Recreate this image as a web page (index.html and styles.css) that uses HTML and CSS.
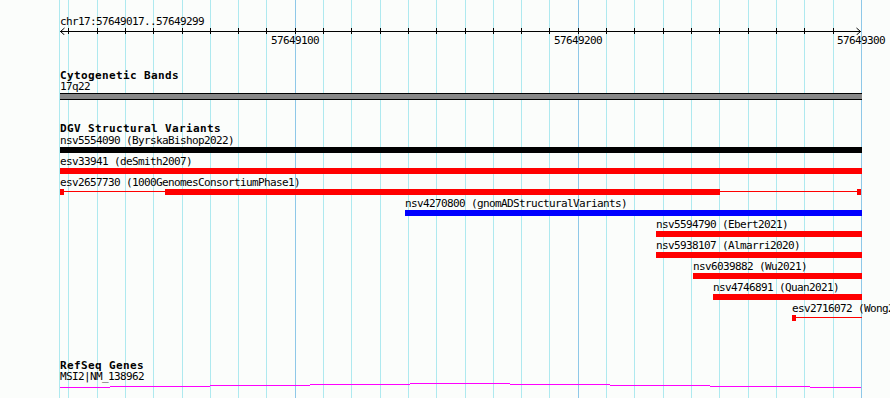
FILE: index.html
```html
<!DOCTYPE html>
<html lang="en">
<head>
    <meta charset="UTF-8">
    <meta name="viewport" content="width=device-width, initial-scale=1.0">
    <title>chr17:57649017..57649299</title>
    <link rel="stylesheet" href="styles.css">
</head>
<body>

<div class="browser">

    <!-- Grid lines every 10 bp, darker every 100 bp -->
    <svg class="grid" width="890" height="398">
        <path class="minor" d="M59.5 0V398 M68.5 0V398 M97.5 0V398 M125.5 0V398 M153.5 0V398 M182.5 0V398 M210.5 0V398 M238.5 0V398 M266.5 0V398
            M323.5 0V398 M351.5 0V398 M380.5 0V398 M408.5 0V398 M436.5 0V398 M465.5 0V398 M493.5 0V398 M521.5 0V398 M549.5 0V398
            M606.5 0V398 M634.5 0V398 M663.5 0V398 M691.5 0V398 M719.5 0V398 M748.5 0V398 M776.5 0V398 M804.5 0V398 M833.5 0V398"/>
        <path class="major" d="M295.5 0V398 M578.5 0V398 M861.5 0V398"/>
    </svg>

    <div class="view">

        <!-- Ruler -->
        <div class="ruler">
            <div class="locus">chr17:57649017..57649299</div>
            <svg class="scale" width="802" height="8">
                <rect x="0" y="4" width="801" height="1"/>
                <path class="ticks" d="M8.5 1V7 M37.5 1V7 M65.5 1V7 M93.5 1V7 M122.5 1V7 M150.5 1V7 M178.5 1V7 M206.5 1V7 M235.5 1V7
                    M263.5 1V7 M291.5 1V7 M320.5 1V7 M348.5 1V7 M376.5 1V7 M405.5 1V7 M433.5 1V7 M461.5 1V7 M489.5 1V7 M518.5 1V7
                    M546.5 1V7 M574.5 1V7 M603.5 1V7 M631.5 1V7 M659.5 1V7 M688.5 1V7 M716.5 1V7 M744.5 1V7 M773.5 1V7"/>
                <polyline class="arrow" points="4.5,1 0.5,4.5 4.5,8"/>
                <polyline class="arrow" points="796.5,1 800.5,4.5 796.5,8"/>
            </svg>
            <div class="tick-labels">
                <span class="tick-label" style="left: 235px">57649100</span>
                <span class="tick-label" style="left: 518px">57649200</span>
                <span class="tick-label" style="left: 801px">57649300</span>
            </div>
        </div>

        <!-- Cytogenetic Bands -->
        <div class="track cyto">
            <div class="track-title">Cytogenetic Bands</div>
            <div class="label">17q22</div>
            <div class="band"></div>
        </div>

        <!-- DGV Structural Variants -->
        <div class="track dgv">
            <div class="track-title">DGV Structural Variants</div>
            <div class="rows">
                <div class="row">
                    <div class="feature" style="margin-left: 0px">
                        <div class="label">nsv5554090 (ByrskaBishop2022)</div>
                        <div class="bar black" style="width: 802px"></div>
                    </div>
                </div>
                <div class="row">
                    <div class="feature" style="margin-left: 0px">
                        <div class="label">esv33941 (deSmith2007)</div>
                        <div class="bar red" style="width: 802px"></div>
                    </div>
                </div>
                <div class="row">
                    <div class="feature" style="margin-left: 0px">
                        <div class="label">esv2657730 (1000GenomesConsortiumPhase1)</div>
                        <div class="parts">
                            <div class="part box" style="width: 4px"></div>
                            <div class="part line" style="width: 101px"></div>
                            <div class="part box" style="width: 555px"></div>
                            <div class="part line" style="width: 137px"></div>
                            <div class="part box" style="width: 4px"></div>
                        </div>
                    </div>
                </div>
                <div class="row">
                    <div class="feature" style="margin-left: 345px">
                        <div class="label">nsv4270800 (gnomADStructuralVariants)</div>
                        <div class="bar blue" style="width: 457px"></div>
                    </div>
                </div>
                <div class="row">
                    <div class="feature" style="margin-left: 596px">
                        <div class="label">nsv5594790 (Ebert2021)</div>
                        <div class="bar red" style="width: 206px"></div>
                    </div>
                </div>
                <div class="row">
                    <div class="feature" style="margin-left: 596px">
                        <div class="label">nsv5938107 (Almarri2020)</div>
                        <div class="bar red" style="width: 206px"></div>
                    </div>
                </div>
                <div class="row">
                    <div class="feature" style="margin-left: 633px">
                        <div class="label">nsv6039882 (Wu2021)</div>
                        <div class="bar red" style="width: 169px"></div>
                    </div>
                </div>
                <div class="row">
                    <div class="feature" style="margin-left: 653px">
                        <div class="label">nsv4746891 (Quan2021)</div>
                        <div class="bar red" style="width: 149px"></div>
                    </div>
                </div>
                <div class="row">
                    <div class="feature" style="margin-left: 732px">
                        <div class="label">esv2716072 (Wong2007)</div>
                        <div class="parts">
                            <div class="part box" style="width: 4px"></div>
                            <div class="part line" style="width: 66px"></div>
                        </div>
                    </div>
                </div>
            </div>
        </div>

        <!-- RefSeq Genes -->
        <div class="track refseq">
            <div class="track-title">RefSeq Genes</div>
            <div class="label">MSI2|NM_138962</div>
            <svg class="intron" width="802" height="8">
                <path d="M0 5.5H50 M50 4.5H150 M150 3.5H250 M250 2.5H350 M350 1.5H450 M450 2.5H550 M550 3.5H650 M650 4.5H750 M750 5.5H801"/>
            </svg>
        </div>

    </div>
</div>

</body>
</html>
```

FILE: styles.css
```css
/* Global */
* {
    margin: 0;
    padding: 0;
    box-sizing: border-box;
}

body {
    background: #fbfdfb;
    color: #000;
    font-family: "DejaVu Sans Mono", "Liberation Mono", monospace;
    overflow: hidden;
}

.browser {
    position: relative;
    width: 890px;
    height: 398px;
    overflow: hidden;
}

/* Grid */
.grid {
    position: absolute;
    top: 0;
    left: 0;
    shape-rendering: crispEdges;
}

.grid .minor {
    stroke: #aee9ef;
    stroke-width: 1;
}

.grid .major {
    stroke: #8ec8e8;
    stroke-width: 1;
}

/* Visible region starts at x = 60 */
.view {
    position: relative;
    margin-left: 60px;
    width: 802px;
}

/* Text */
.label,
.locus,
.tick-label {
    font-size: 11px;
    line-height: 11px;
    letter-spacing: -0.62px;
    white-space: nowrap;
}

.track-title {
    font-size: 11px;
    font-weight: bold;
    line-height: 11px;
    letter-spacing: 0.38px;
    white-space: nowrap;
}

/* Ruler */
.ruler {
    padding-top: 16px;
}

.scale {
    display: block;
}

.scale rect {
    fill: #000;
}

.scale .ticks {
    stroke: #000;
    shape-rendering: crispEdges;
}

.scale .arrow {
    fill: none;
    stroke: #000;
    stroke-width: 1;
}

.tick-labels {
    position: relative;
    height: 11px;
}

.tick-label {
    position: absolute;
    top: 0;
    transform: translateX(-50%);
}

/* Tracks */
.cyto {
    margin-top: 24px;
}

.band {
    height: 7px;
    margin-top: 1px;
    background: #888;
    border-top: 1px solid #000;
    border-bottom: 1px solid #000;
}

.dgv {
    margin-top: 23px;
}

.rows {
    margin-top: 1px;
}

.row {
    height: 21px;
}

.bar {
    height: 6px;
    margin-top: 1px;
}

.bar.black { background: #000; }
.bar.red { background: #f00; }
.bar.blue { background: #00f; }

.parts {
    display: flex;
    height: 6px;
    margin-top: 1px;
}

.part.box {
    height: 6px;
    background: #f00;
}

.part.line {
    height: 1px;
    margin-top: 2px;
    background: #f00;
}

.refseq {
    margin-top: 36px;
}

.intron {
    display: block;
}

.intron path {
    stroke: #f0f;
    stroke-width: 1;
    shape-rendering: crispEdges;
}
```
